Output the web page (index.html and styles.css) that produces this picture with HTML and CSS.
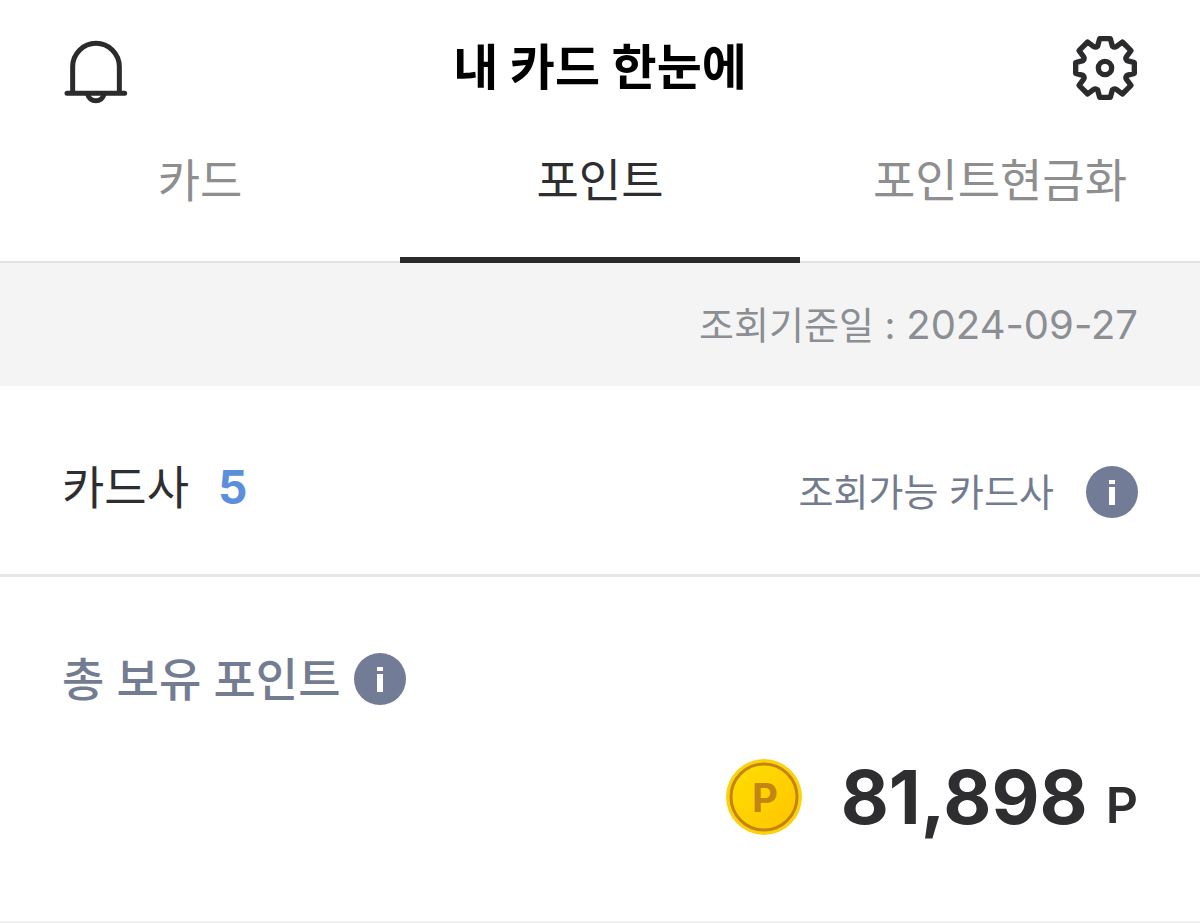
FILE: index.html
```html
<!DOCTYPE html>
<html lang="ko">
<head>
    <meta charset="UTF-8">
    <meta name="viewport" content="width=device-width, initial-scale=1.0">
    <title>내 카드 한눈에</title>
    <link rel="stylesheet" href="styles.css">
</head>
<body>

    <header class="header">
        <button type="button" class="icon-btn" aria-label="알림">
            <svg width="66" height="74" viewBox="36 16 198 222" fill="none" stroke="#2b2b2d" stroke-width="15" stroke-linecap="round">
                <path d="M68 203V123a70 70 0 0 1 140 0v80M51 203H224"/>
                <path d="M113 206a25 24 0 0 0 49 0" stroke-linecap="butt"/>
            </svg>
        </button>
        <h1>내 카드 한눈에</h1>
        <button type="button" class="icon-btn" aria-label="설정">
            <svg width="66" height="66" viewBox="-99 -99 198 198" fill="none" stroke="#2b2b2d" stroke-width="16" stroke-linejoin="round">
                <path d="M-16 -88L16 -88 22 -66Q28 -60 35 -65L52 -78 78 -52 65 -35Q60 -28 66 -22L88 -16 88 16 66 22Q60 28 65 35L78 52 52 78 35 65Q28 60 22 66L16 88 -16 88 -22 66Q-28 60 -35 65L-52 78 -78 52 -65 35Q-60 28 -66 22L-88 16 -88 -16 -66 -22Q-60 -28 -65 -35L-78 -52 -52 -78 -35 -65Q-28 -60 -22 -66Z"/>
                <circle r="20"/>
            </svg>
        </button>
    </header>

    <nav class="tabs">
        <a href="#card">카드</a>
        <a href="#point" class="active" aria-current="page">포인트</a>
        <a href="#cash">포인트현금화</a>
    </nav>

    <main>
        <p class="base-date">조회기준일 : <time datetime="2024-09-27">2024-09-27</time></p>

        <section class="company">
            <h2>카드사 <span class="count">5</span></h2>
            <div class="available">
                <span>조회가능 카드사</span>
                <button type="button" class="info-btn" aria-label="조회가능 카드사 안내">
                    <svg width="52" height="52" viewBox="0 0 52 52">
                        <circle cx="26" cy="26" r="26" fill="#737c96"/>
                        <path d="M23 14h6v4h-6zM23 21h6v18h-6z" fill="#fff"/>
                    </svg>
                </button>
            </div>
        </section>

        <section class="points">
            <div class="points-title">
                <h2>총 보유 포인트</h2>
                <button type="button" class="info-btn" aria-label="총 보유 포인트 안내">
                    <svg width="52" height="52" viewBox="0 0 52 52">
                        <circle cx="26" cy="26" r="26" fill="#737c96"/>
                        <path d="M23 14h6v4h-6zM23 21h6v18h-6z" fill="#fff"/>
                    </svg>
                </button>
            </div>
            <div class="total">
                <svg class="coin" width="78" height="78" viewBox="0 0 78 78">
                    <defs>
                        <linearGradient id="coin-face" x1="0" y1="0" x2="1" y2="1">
                            <stop offset="0" stop-color="#ffdf00"/>
                            <stop offset="1" stop-color="#ffc400"/>
                        </linearGradient>
                    </defs>
                    <circle cx="39" cy="39" r="38" fill="#fdd20c"/>
                    <circle cx="39" cy="39" r="33" fill="url(#coin-face)" stroke="#c38412" stroke-width="3"/>
                    <text x="40" y="54" text-anchor="middle">P</text>
                </svg>
                <strong class="amount">81,898</strong>
                <span class="unit">P</span>
            </div>
        </section>
    </main>

</body>
</html>
```

FILE: styles.css
```css
* {
    box-sizing: border-box;
}
body {
    font-family: Inter, "Noto Sans CJK KR", sans-serif;
    margin: 0;
    background-color: white;
    color: #2e2e30;
}
h1, h2, p {
    margin: 0;
}
button {
    display: block;
    padding: 0;
    border: none;
    background: none;
    cursor: pointer;
}
svg {
    display: block;
}
.header {
    display: flex;
    align-items: center;
    justify-content: space-between;
    height: 136px;
    padding: 0 62px;
}
.header h1 {
    font-size: 49px;
    line-height: 60px;
    font-weight: 700;
    color: #000;
}
.tabs {
    display: grid;
    grid-template-columns: repeat(3, 1fr);
    height: 127px;
    border-bottom: 2px solid #e2e2e2;
}
.tabs a {
    padding-top: 14px;
    font-size: 46px;
    line-height: 60px;
    text-align: center;
    text-decoration: none;
    color: #8e8e8e;
}
.tabs .active {
    margin-bottom: -2px;
    border-bottom: 6px solid #2b2b2d;
    color: #2e2e30;
}
.base-date {
    padding: 32px 62px 31px;
    font-size: 38px;
    line-height: 60px;
    text-align: right;
    background-color: #f4f4f4;
    color: #8b8e92;
}
.base-date time {
    font-size: 40px;
}
.company {
    display: flex;
    align-items: center;
    justify-content: space-between;
    height: 191px;
    padding: 14px 62px 0;
    border-bottom: 3px solid #e6e6e6;
}
h2 {
    font-size: 46px;
    line-height: 60px;
    font-weight: 400;
}
.count {
    margin-left: 16px;
    font-weight: 700;
    color: #5b8edb;
}
.available {
    display: flex;
    align-items: center;
    gap: 32px;
    padding-top: 10px;
    font-size: 38px;
    line-height: 60px;
    color: #737c8f;
}
.points {
    padding: 72px 62px 82px;
    border-bottom: 2px solid #f0f0f0;
}
.points-title {
    display: flex;
    align-items: center;
    gap: 14px;
}
.points-title h2 {
    font-weight: 500;
    color: #737c91;
}
.total {
    display: flex;
    align-items: center;
    justify-content: flex-end;
    padding-top: 46px;
}
.coin text {
    font-size: 40px;
    font-weight: 700;
    fill: #c38412;
}
.amount {
    margin: 0 18px 0 38px;
    font-size: 74px;
    line-height: 84px;
}
.unit {
    padding-top: 16px;
    font-size: 50px;
    line-height: 60px;
    font-weight: 600;
}
```
